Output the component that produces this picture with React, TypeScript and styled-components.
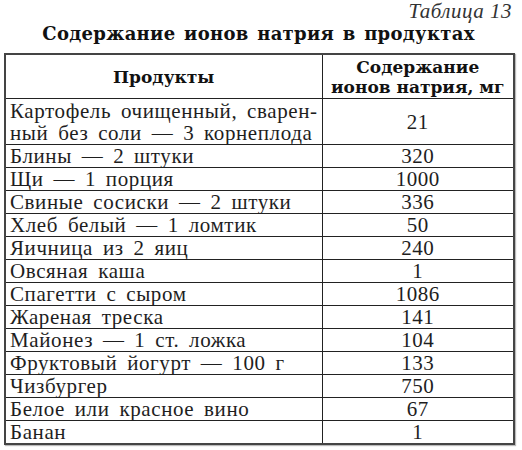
import React from 'react';
import styled, { createGlobalStyle } from 'styled-components';

const GlobalStyle = createGlobalStyle`
  html, body {
    margin: 0;
    padding: 0;
    background: #ffffff;
  }
`;

const Page = styled.div`
  width: 522px;
  height: 450px;
  padding: 0 0 0 4px;
  box-sizing: border-box;
  font-family: "Liberation Serif", "DejaVu Serif", serif;
  color: #1e1e1e;
`;

const TableNo = styled.div`
  text-align: right;
  padding-right: 10px;
  font-style: italic;
  font-size: 21px;
  line-height: 22px;
  height: 22px;
  color: #333;
  letter-spacing: 0.5px;
`;

const Title = styled.h2`
  margin: 0;
  text-align: center;
  width: 509px;
  font-family: "DejaVu Serif", serif;
  font-weight: bold;
  font-size: 18px;
  line-height: 24px;
  height: 31px;
  letter-spacing: 0.3px;
  word-spacing: 2px;
  color: #111;
`;

const Table = styled.table`
  width: 509px;
  table-layout: fixed;
  border-collapse: collapse;
  border: 2px solid #444;
  box-shadow: 1px 1px 1px #bbb;
`;

const HeadCell = styled.th`
  border: 1px solid #222;
  font-family: "DejaVu Serif", serif;
  font-weight: bold;
  font-size: 17px;
  line-height: 20px;
  height: 43px;
  padding: 0;
  text-align: center;
  color: #111;
`;

const Row = styled.tr<{ $tall?: boolean }>`
  height: ${(p) => (p.$tall ? '46px' : '22.5px')};
`;

const NameCell = styled.td`
  border: 1px solid #222;
  padding: 1px 0 0 4px;
  font-size: 21px;
  line-height: 21px;
  letter-spacing: 0.6px;
  word-spacing: 4px;
  white-space: nowrap;
  vertical-align: middle;
`;

const TwoLineName = styled(NameCell)`
  line-height: 22px;
`;

const ValueCell = styled.td`
  border: 1px solid #222;
  padding: 1px 0 0;
  text-align: center;
  font-size: 21px;
  line-height: 21px;
  letter-spacing: 0.5px;
  vertical-align: middle;
`;

const rows: [string, string][] = [
  ['Блины — 2 штуки', '320'],
  ['Щи — 1 порция', '1000'],
  ['Свиные сосиски — 2 штуки', '336'],
  ['Хлеб белый — 1 ломтик', '50'],
  ['Яичница из 2 яиц', '240'],
  ['Овсяная каша', '1'],
  ['Спагетти с сыром', '1086'],
  ['Жареная треска', '141'],
  ['Майонез — 1 ст. ложка', '104'],
  ['Фруктовый йогурт — 100 г', '133'],
  ['Чизбургер', '750'],
  ['Белое или красное вино', '67'],
  ['Банан', '1'],
];

const App: React.FC = () => {
  return (
    <Page>
      <GlobalStyle />
      <TableNo>Таблица 13</TableNo>
      <Title>Содержание ионов натрия в продуктах</Title>
      <Table>
        <colgroup>
          <col style={{ width: 317 }} />
          <col style={{ width: 192 }} />
        </colgroup>
        <thead>
          <tr>
            <HeadCell>Продукты</HeadCell>
            <HeadCell>
              Содержание
              <br />
              ионов натрия, мг
            </HeadCell>
          </tr>
        </thead>
        <tbody>
          <Row $tall>
            <TwoLineName>
              Картофель очищенный, сварен-
              <br />
              ный без соли — 3 корнеплода
            </TwoLineName>
            <ValueCell>21</ValueCell>
          </Row>
          {rows.map(([name, value]) => (
            <Row key={name}>
              <NameCell>{name}</NameCell>
              <ValueCell>{value}</ValueCell>
            </Row>
          ))}
        </tbody>
      </Table>
    </Page>
  );
};

export default App;
